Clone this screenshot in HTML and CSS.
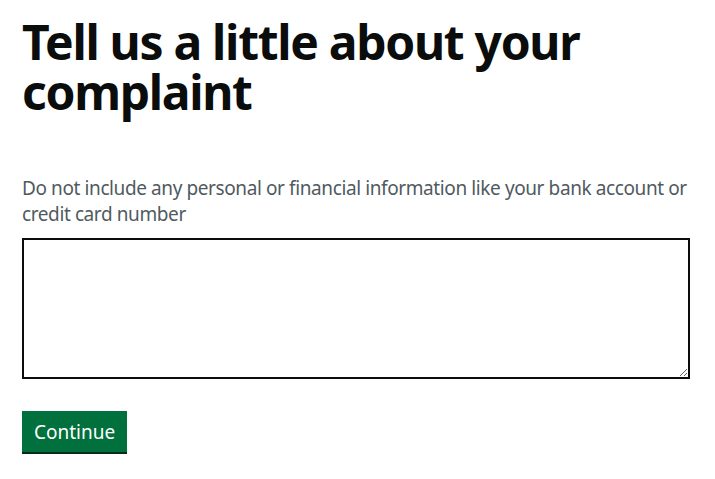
FILE: index.html
```html
<!DOCTYPE html>
<html lang="en">
<head>
<meta charset="utf-8">
<title>Tell us a little about your complaint</title>
<link rel="stylesheet" href="styles.css">
</head>
<body>
<main class="page">
  <form class="form">
    <h1 class="heading">
      <label for="complaint">Tell us a little about your complaint</label>
    </h1>
    <div class="hint">Do not include any personal or financial information like your bank account or credit card number</div>
    <textarea id="complaint" class="textarea" rows="5"></textarea>
    <button type="button" class="button">Continue</button>
  </form>
</main>
</body>
</html>
```
FILE: styles.css
```css
html, body {
  margin: 0;
  padding: 0;
  background: #ffffff;
}
.page {
  padding: 17px 25px 20px 22px;
  font-family: "Noto Sans", "Liberation Sans", sans-serif;
  color: #0b0c0c;
}
.form {
  display: flex;
  flex-direction: column;
  align-items: flex-start;
}
.heading {
  margin: 0 0 58px 0;
  font-size: 48px;
  line-height: 50px;
  font-weight: 700;
  letter-spacing: -1.3px;
  max-width: 600px;
}
.hint {
  font-size: 19px;
  line-height: 26px;
  color: #505a5f;
  margin-bottom: 11px;
  letter-spacing: -0.4px;
}
.textarea {
  box-sizing: border-box;
  width: 668px;
  height: 141px;
  border: 2px solid #0b0c0c;
  border-radius: 0;
  margin: 0 0 32px 0;
  padding: 5px;
  font-family: inherit;
  font-size: 19px;
}
.button {
  box-sizing: border-box;
  background: #00703c;
  color: #ffffff;
  border: 2px solid transparent;
  border-radius: 0;
  box-shadow: 0 2px 0 #002d18;
  font-family: inherit;
  font-size: 19px;
  line-height: 19px;
  padding: 8px 10px 7px;
  height: 41px;
  width: 105px;
  cursor: pointer;
}
```
